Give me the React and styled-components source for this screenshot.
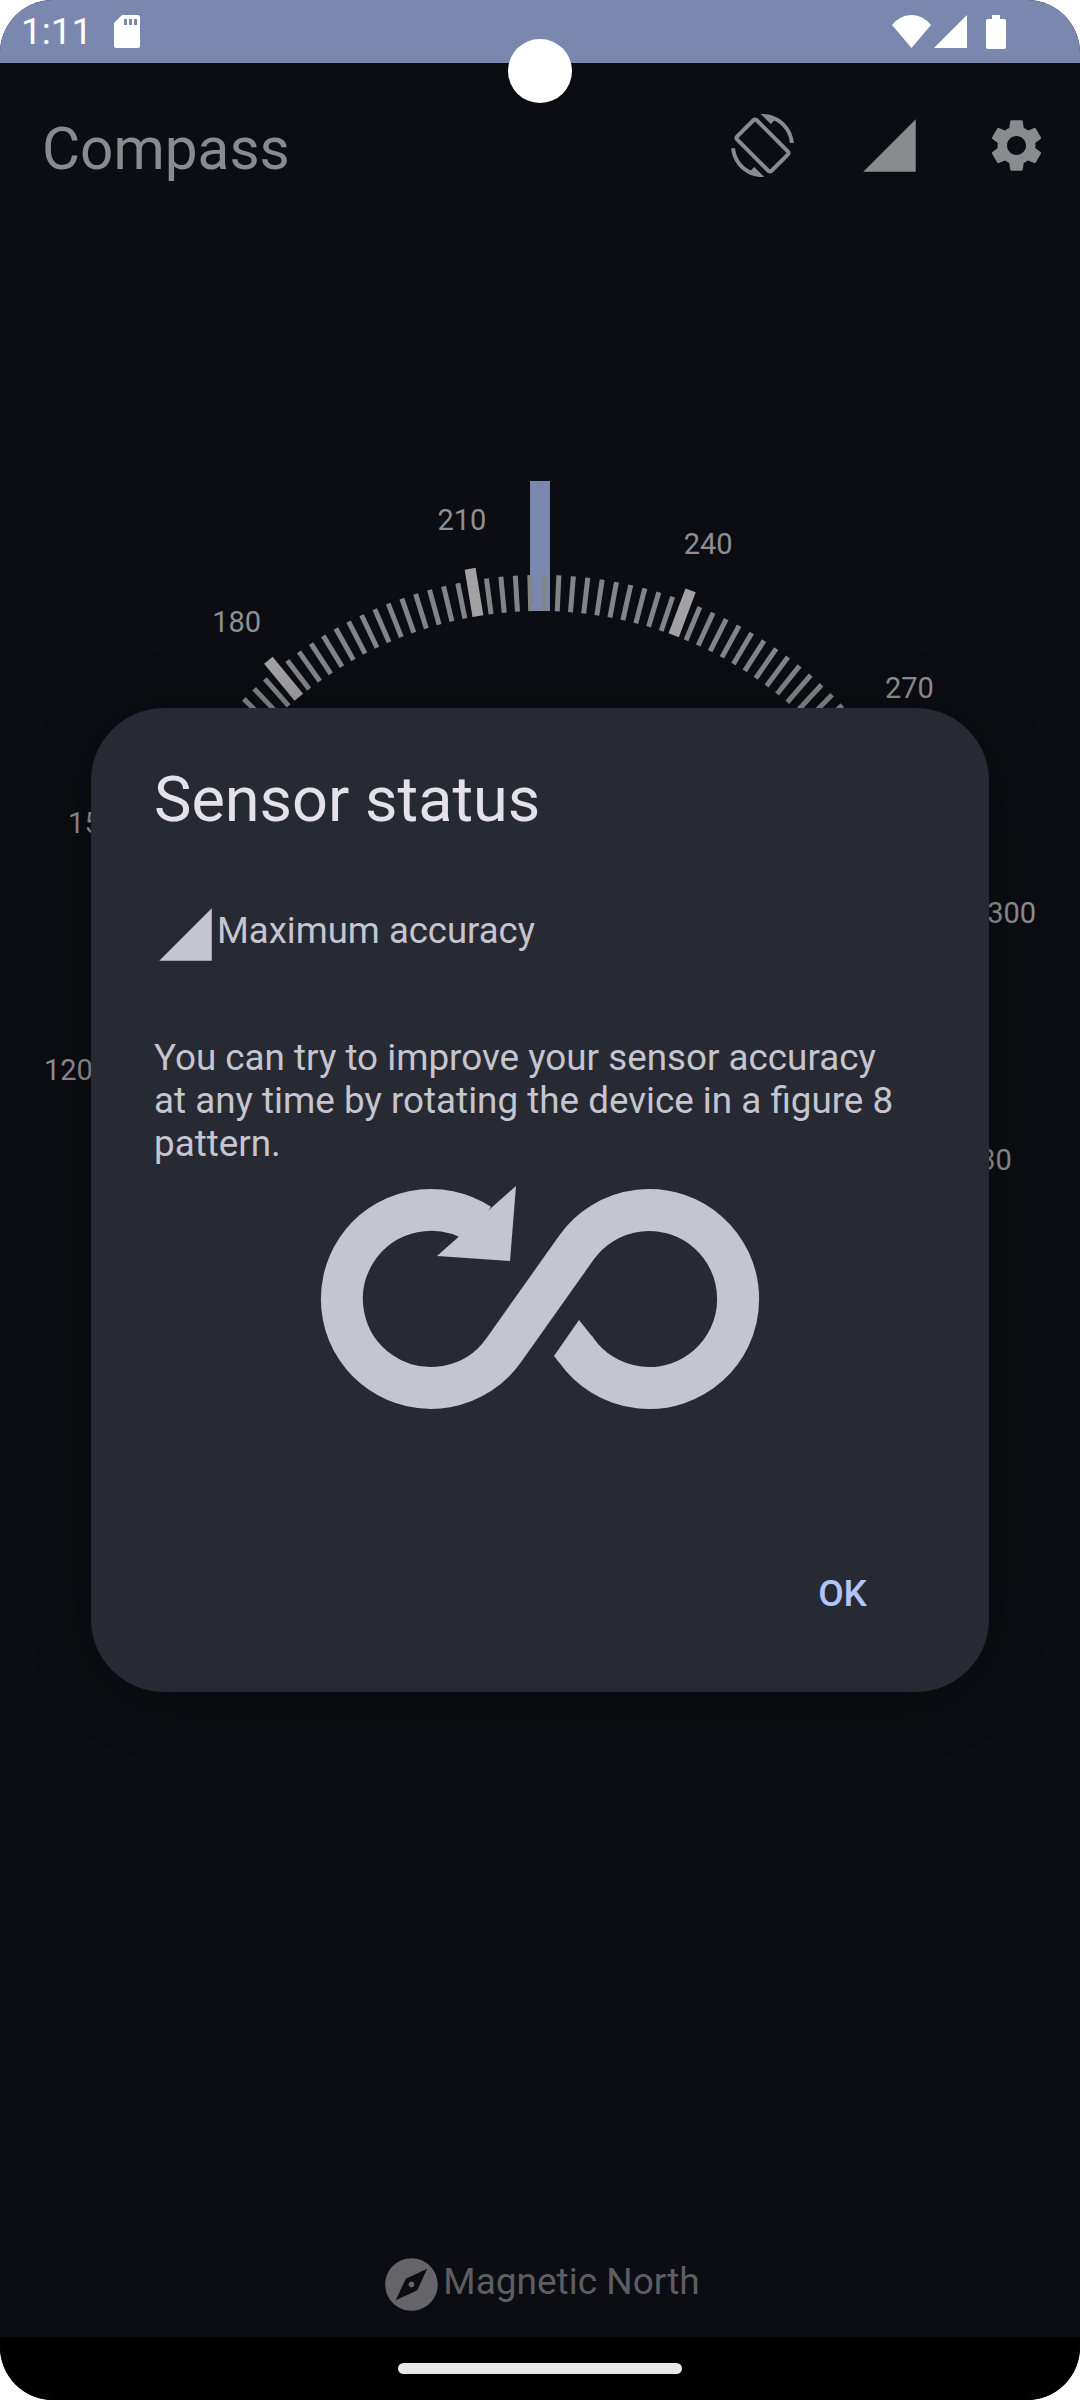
import styled, { createGlobalStyle } from "styled-components";

const GlobalStyle = createGlobalStyle`
  html, body {
    margin: 0;
    padding: 0;
    background: #ffffff;
  }
  * {
    box-sizing: border-box;
  }
`;

const colors = {
  page: "#0c0d12",
  accent: "#7a88b0",
  muted: "#8a8b8f",
  onDialog: "#c5c5cf",
};

// material icon paths, 24 unit box
const ROTATE_PATH =
  "M16.48 2.52c3.27 1.55 5.61 4.72 5.97 8.48h1.5C23.44 4.84 18.29 0 12 0l-.66.03 3.81 3.81 1.33-1.32zm-6.25-.77c-.59-.59-1.54-.59-2.12 0L1.75 8.11c-.59.59-.59 1.54 0 2.12l12.02 12.02c.59.59 1.54.59 2.12 0l6.36-6.36c.59-.59.59-1.54 0-2.12L10.23 1.75zm4.6 19.44L2.81 9.17l6.36-6.36 12.02 12.02-6.36 6.36zm-7.31.29C4.25 19.94 1.91 16.76 1.55 13H.05C.56 19.16 5.71 24 12 24l.66-.03-3.81-3.81-1.33 1.32z";
const SETTINGS_PATH =
  "M19.14 12.94c.04-.3.06-.61.06-.94 0-.32-.02-.64-.07-.94l2.03-1.58c.18-.14.23-.41.12-.61l-1.92-3.32c-.12-.22-.37-.29-.59-.22l-2.39.96c-.5-.38-1.03-.7-1.62-.94l-.36-2.54c-.04-.24-.24-.41-.48-.41h-3.84c-.24 0-.43.17-.47.41l-.36 2.54c-.59.24-1.13.57-1.62.94l-2.39-.96c-.22-.08-.47 0-.59.22L2.74 8.87c-.12.21-.08.47.12.61l2.03 1.58c-.05.3-.09.63-.09.94s.02.64.07.94l-2.03 1.58c-.18.14-.23.41-.12.61l1.92 3.32c.12.22.37.29.59.22l2.39-.96c.5.38 1.03.7 1.62.94l.36 2.54c.05.24.24.41.48.41h3.84c.24 0 .44-.17.47-.41l.36-2.54c.59-.24 1.13-.56 1.62-.94l2.39.96c.22.08.47 0 .59-.22l1.92-3.32c.12-.22.07-.47-.12-.61l-2.01-1.58zM12 15.6c-1.98 0-3.6-1.62-3.6-3.6s1.62-3.6 3.6-3.6 3.6 1.62 3.6 3.6-1.62 3.6-3.6 3.6z";
const SIGNAL_PATH = "M2 22h20V2z";
const EXPLORE_PATH =
  "M12 10.9c-.61 0-1.1.49-1.1 1.1s.49 1.1 1.1 1.1c.61 0 1.1-.49 1.1-1.1s-.49-1.1-1.1-1.1zM12 2C6.48 2 2 6.48 2 12s4.48 10 10 10 10-4.48 10-10S17.52 2 12 2zm2.19 12.19L6 18l3.81-8.19L18 6l-3.81 8.19z";

const Icon = styled.svg`
  display: block;
  flex: none;
  width: 63px;
  height: 63px;
  fill: ${(p) => p.$color};
`;

const MaterialIcon = ({ path, color }) => (
  <Icon viewBox="0 0 24 24" $color={color}>
    <path d={path} />
  </Icon>
);

const Screen = styled.div`
  position: relative;
  display: flex;
  flex-direction: column;
  width: 1080px;
  height: 2400px;
  overflow: hidden;
  border-radius: 53px;
  background: ${colors.page};
  font-family: Roboto, "Liberation Sans", sans-serif;
`;

const StatusBar = styled.div`
  display: flex;
  flex: none;
  align-items: center;
  height: 63px;
  padding: 0 74px 0 21px;
  background: ${colors.accent};
  color: #ffffff;
`;

const Clock = styled.span`
  width: 93px;
  font-size: 37px;
  line-height: 44px;
`;

const StatusRight = styled.div`
  display: flex;
  align-items: center;
  margin-left: auto;
`;

const StatusGlyph = styled.svg`
  display: block;
  flex: none;
  margin-left: ${(p) => p.$gap || 0}px;
  fill: #ffffff;
`;

const Camera = styled.div`
  position: absolute;
  top: 39px;
  left: 508px;
  width: 64px;
  height: 64px;
  border-radius: 50%;
  background: #ffffff;
`;

const Toolbar = styled.div`
  display: flex;
  flex: none;
  align-items: flex-start;
  height: 165px;
  padding: 51px 32px 0 42px;
`;

const Title = styled.h1`
  margin: 0;
  font-size: 58.5px;
  font-weight: 400;
  line-height: 70px;
  color: ${colors.muted};
`;

const Actions = styled.div`
  display: flex;
  gap: 64px;
  margin-left: auto;
`;

const Main = styled.main`
  flex: 1;
  min-height: 0;
  padding-top: 212px;
`;

const DialSvg = styled.svg`
  display: block;
  width: 1080px;
  height: 1040px;
`;

const DialLabel = styled.text`
  font-size: 29px;
  fill: #8f8f93;
  text-anchor: middle;
`;

const Footer = styled.div`
  display: flex;
  flex: none;
  align-items: center;
  justify-content: center;
  height: 63px;
  margin-bottom: 21px;
`;

const FooterText = styled.span`
  padding-bottom: 6px;
  font-size: 37px;
  line-height: 44px;
  color: #5e5e62;
`;

const NavBar = styled.div`
  display: flex;
  flex: none;
  align-items: center;
  justify-content: center;
  height: 63px;
  background: #000000;
`;

const HomePill = styled.div`
  width: 284px;
  height: 11px;
  border-radius: 6px;
  background: #e8e8e8;
`;

const Dialog = styled.section`
  position: absolute;
  top: 708px;
  left: 91px;
  display: flex;
  flex-direction: column;
  width: 898px;
  height: 984px;
  padding: 0 63px;
  border-radius: 73px;
  background: #282a33;
  box-shadow: 0 6px 60px rgba(0, 0, 0, 0.3);
`;

const DialogTitle = styled.h2`
  margin: 55px 0 0;
  font-size: 63px;
  font-weight: 400;
  line-height: 74px;
  color: #e4e2e8;
`;

const StatusRow = styled.div`
  display: flex;
  align-items: center;
  margin-top: 66px;
`;

const RowText = styled.span`
  padding-bottom: 8px;
  font-size: 36.5px;
  line-height: 44px;
  color: ${colors.onDialog};
`;

const DialogBody = styled.p`
  max-width: 755px;
  height: 130px;
  margin: 70px 0 0;
  font-size: 36.8px;
  line-height: 43px;
  color: ${colors.onDialog};
`;

const Figure8 = styled.svg`
  display: block;
  align-self: center;
  width: 440px;
  height: 226px;
  margin-top: 19px;
`;

const OkButton = styled.button`
  align-self: flex-end;
  margin: auto 59px 76px 0;
  padding: 0;
  border: 0;
  background: none;
  font-family: inherit;
  font-size: 37px;
  font-weight: 500;
  line-height: 44px;
  color: #b1c4fb;
`;

const CX = 540;
const CY = 991;
const HEADING = 219.4;

const polar = (deg, r) => {
  const a = ((deg - HEADING) * Math.PI) / 180;
  return [CX + r * Math.sin(a), CY - r * Math.cos(a)];
};

const Dial = () => {
  const ticks = [];
  for (let d = 0; d < 360; d += 2) {
    const major = d % 30 === 0;
    const [x1, y1] = polar(d, 380);
    const [x2, y2] = polar(d, major ? 428 : 416);
    ticks.push(
      <line
        key={d}
        x1={x1}
        y1={y1}
        x2={x2}
        y2={y2}
        stroke={major ? "#a2a2a4" : "#838488"}
        strokeWidth={major ? 11 : 5}
      />
    );
  }
  const labels = [];
  for (let d = 30; d <= 360; d += 30) {
    const [x, y] = polar(d, 478);
    labels.push(
      <DialLabel key={d} x={x} y={y + 10.5}>
        {d}
      </DialLabel>
    );
  }
  return (
    <DialSvg viewBox="0 440 1080 1040">
      <rect x="530" y="481" width="20" height="130" fill={colors.accent} />
      {ticks}
      {labels}
    </DialSvg>
  );
};

export default function App() {
  return (
    <>
      <GlobalStyle />
      <Screen>
        <StatusBar>
          <Clock>1:11</Clock>
          <StatusGlyph width="26" height="33" viewBox="0 0 26 33">
            <path d="M8 0H24a2 2 0 0 1 2 2V31a2 2 0 0 1-2 2H2a2 2 0 0 1-2-2V8Z" />
            <rect x="10" y="4" width="3" height="6" fill={colors.accent} />
            <rect x="15" y="4" width="3" height="6" fill={colors.accent} />
            <rect x="20" y="4" width="3" height="6" fill={colors.accent} />
          </StatusGlyph>
          <StatusRight>
            <StatusGlyph width="39" height="33" viewBox="0 0 39 33">
              <path d="M0 10L19.5 33L39 10A24 24 0 0 0 0 10Z" />
            </StatusGlyph>
            <StatusGlyph $gap={3} width="33" height="33" viewBox="0 0 33 33">
              <path d="M0 33H33V0Z" />
            </StatusGlyph>
            <StatusGlyph $gap={19} width="20" height="34" viewBox="0 0 20 34">
              <path d="M6 0H14V4H18a2 2 0 0 1 2 2V32a2 2 0 0 1-2 2H2a2 2 0 0 1-2-2V6a2 2 0 0 1 2-2H6Z" />
            </StatusGlyph>
          </StatusRight>
        </StatusBar>

        <Toolbar>
          <Title>Compass</Title>
          <Actions>
            <MaterialIcon path={ROTATE_PATH} color={colors.muted} />
            <MaterialIcon path={SIGNAL_PATH} color={colors.muted} />
            <MaterialIcon path={SETTINGS_PATH} color={colors.muted} />
          </Actions>
        </Toolbar>

        <Main>
          <Dial />
        </Main>

        <Footer>
          <MaterialIcon path={EXPLORE_PATH} color="#66666a" />
          <FooterText>Magnetic North</FooterText>
        </Footer>

        <NavBar>
          <HomePill />
        </NavBar>

        <Camera />

        <Dialog>
          <DialogTitle>Sensor status</DialogTitle>
          <StatusRow>
            <MaterialIcon path={SIGNAL_PATH} color={colors.onDialog} />
            <RowText>Maximum accuracy</RowText>
          </StatusRow>
          <DialogBody>
            You can try to improve your sensor accuracy at any time by rotating
            the device in a figure 8 pattern.
          </DialogBody>
          <Figure8 viewBox="0 0 440 226">
            <path
              d="M159.5 39.4A89 89 0 1 0 183.6 165.3L256.4 62.7A89 89 0 1 1 256.4 165.3L254.5 162.6"
              fill="none"
              stroke={colors.onDialog}
              strokeWidth="42"
            />
            <path d="M273.5 153.2L259 135L234 171L239.3 177.4Z" fill={colors.onDialog} />
            <path d="M196 1L190 76L117 71Z" fill={colors.onDialog} />
          </Figure8>
          <OkButton>OK</OkButton>
        </Dialog>
      </Screen>
    </>
  );
}
